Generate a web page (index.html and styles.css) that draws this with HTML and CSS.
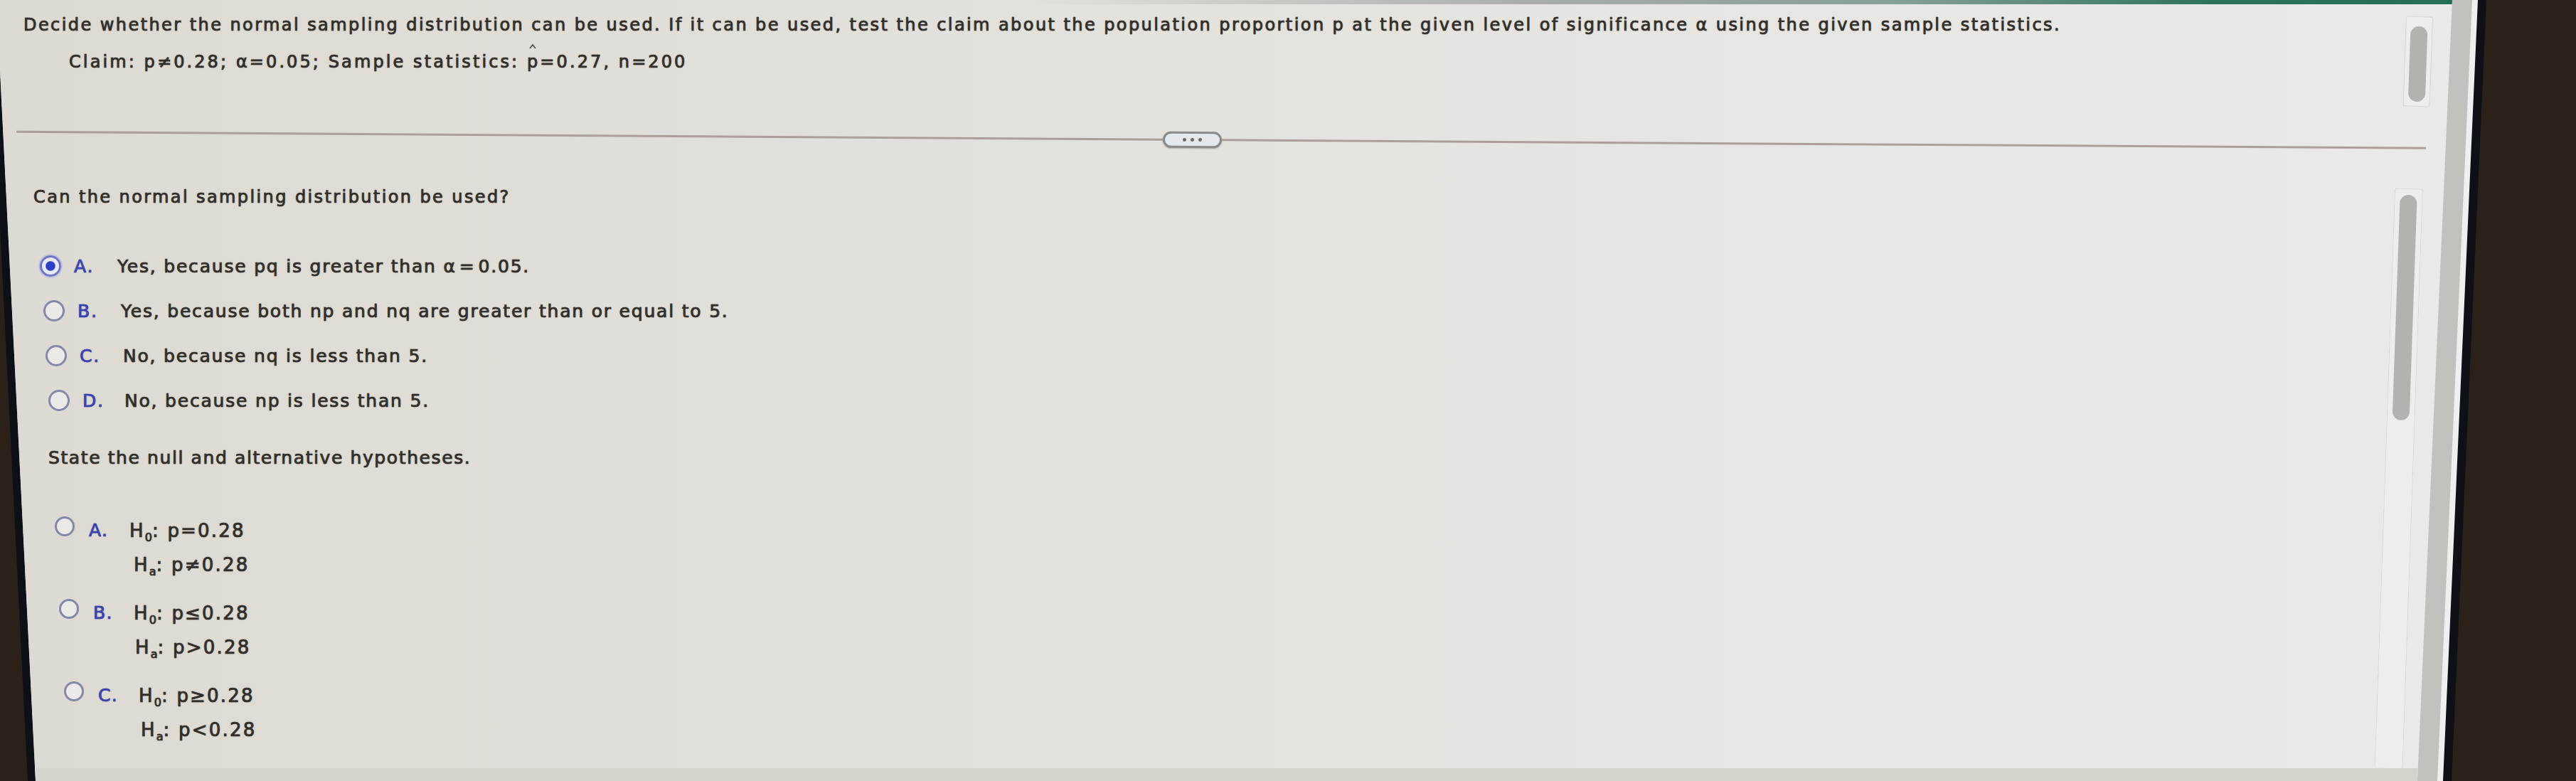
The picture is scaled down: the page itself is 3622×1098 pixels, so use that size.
FILE: index.html
```html
<!DOCTYPE html>
<html lang="en">
<head>
<meta charset="utf-8">
<title>Normal sampling distribution</title>
<link rel="stylesheet" href="styles.css">
</head>
<body>
<div class="frame"><div class="rim"><div class="band"><div class="screen">
  <div class="topbar"></div>
  <section class="pane pane-head">
    <div class="pane-content head-content">
      <p class="title">Decide whether the normal sampling distribution can be used. If it can be used, test the claim about the population proportion p at the given level of significance α using the given sample statistics.</p>
      <p class="claim">Claim: p≠0.28; α=0.05; Sample statistics: <span class="phat">p<svg class="hat" width="10" height="7" viewBox="0 0 10 7"><polyline points="1,6 5,1 9,6" fill="none" stroke="#4a4640" stroke-width="1.6"/></svg></span>=0.27, n=200</p>
    </div>
    <div class="scroll scroll-head"><div class="thumb"></div></div>
  </section>
  <div class="divider">
    <span class="seg seg-left"></span>
    <span class="pill"><i></i><i></i><i></i></span>
    <span class="seg seg-right"></span>
  </div>
  <section class="pane pane-body">
    <div class="pane-content body-content">
      <p class="question q1">Can the normal sampling distribution be used?</p>
      <ul class="choices">
        <li class="choice c1"><span class="radio checked"></span><span class="letter">A.</span><span class="text">Yes, because pq is greater than α<span class="op">=</span>0.05.</span></li>
        <li class="choice c2"><span class="radio"></span><span class="letter">B.</span><span class="text">Yes, because both np and nq are greater than or equal to 5.</span></li>
        <li class="choice c3"><span class="radio"></span><span class="letter">C.</span><span class="text">No, because nq is less than 5.</span></li>
        <li class="choice c4"><span class="radio"></span><span class="letter">D.</span><span class="text">No, because np is less than 5.</span></li>
      </ul>
      <p class="question q2">State the null and alternative hypotheses.</p>
      <ul class="hyps">
        <li class="hyp h1"><span class="radio"></span><span class="letter">A.</span><div class="lines"><span class="ln">H<sub>0</sub>: p=0.28</span><span class="ln ln2">H<sub>a</sub>: p≠0.28</span></div></li>
        <li class="hyp h2"><span class="radio"></span><span class="letter">B.</span><div class="lines"><span class="ln">H<sub>0</sub>: p≤0.28</span><span class="ln ln2">H<sub>a</sub>: p&gt;0.28</span></div></li>
        <li class="hyp h3"><span class="radio"></span><span class="letter">C.</span><div class="lines"><span class="ln">H<sub>0</sub>: p≥0.28</span><span class="ln ln2">H<sub>a</sub>: p&lt;0.28</span></div></li>
      </ul>
    </div>
    <div class="scroll scroll-body"><div class="thumb"></div></div>
  </section>
  <div class="bottom-band"></div>
</div></div></div></div>
</body>
</html>
```

FILE: styles.css
```css
* { box-sizing: border-box; }
html, body { margin: 0; padding: 0; }
body {
  width: 3622px;
  height: 1098px;
  overflow: hidden;
  background: #2b2119;
  font-family: "DejaVu Sans", "Liberation Sans", sans-serif;
  color: #322f2b;
}
p { margin: 0; }
ul { margin: 0; padding: 0; list-style: none; }

/* photographed screen edges */
.frame {
  width: 3622px;
  height: 1098px;
  background: #0e1018;
  clip-path: polygon(0 0, 3496px 0, 3447px 1098px, 39px 1098px, 0 320px);
}
.rim {
  width: 100%;
  height: 100%;
  background: #eef0ef;
  clip-path: polygon(0 0, 3484px 0, 3435px 1098px, 50px 1098px, 0 100px);
}
.band {
  width: 100%;
  height: 100%;
  background: #c4c1bc;
  clip-path: polygon(0 0, 3476px 0, 3427px 1098px, 50px 1098px, 0 100px);
}
.screen {
  width: 100%;
  height: 100%;
  background: linear-gradient(90deg, #dddad3 0%, #e2e0da 35%, #e7e6e2 70%, #ebeae7 100%);
  clip-path: polygon(0 0, 3448px 0, 3399px 1098px, 50px 1098px, 0 100px);
  text-shadow: 0 0 1.4px rgba(50, 47, 43, 0.65);
  -webkit-text-stroke: 0.7px;
}

.topbar {
  height: 6px;
  background: linear-gradient(90deg, rgba(160,160,155,0) 0%, rgba(160,160,155,0) 40%, #a9aca6 60%, #84a093 74%, #2c7456 86%, #1f6d4e 100%);
}

.pane { display: flex; }
.pane-content { flex: 1; min-width: 0; }

.pane-head { height: 178px; }
.head-content { padding-top: 14px; }
.title {
  padding-left: 33px;
  font-size: 24px;
  line-height: 30px;
  letter-spacing: 2.43px;
  white-space: nowrap;
}
.claim {
  margin-top: 22px;
  padding-left: 97px;
  font-size: 24px;
  line-height: 30px;
  letter-spacing: 3.1px;
  white-space: nowrap;
}
.phat { position: relative; }
.hat { position: absolute; left: 3px; top: -11px; }

/* scrollbars */
.scroll {
  flex: none;
  background: #eeede9;
  border: 1px solid #d8d5d0;
  border-radius: 3px;
  transform: rotate(2deg);
  transform-origin: 50% 0;
}
.scroll .thumb {
  width: 24px;
  margin: 0 auto;
  border-radius: 12px;
  background: #b5b2ad;
}
.scroll-head { width: 38px; height: 127px; margin: 17px 201px 0 0; }
.scroll-head .thumb { height: 106px; margin-top: 13px; }
.scroll-body { width: 40px; height: 815px; margin: 57px 215px 0 0; border-bottom: none; }
.scroll-body .thumb { height: 317px; margin-top: 8px; }

/* divider with grip */
.divider {
  display: flex;
  align-items: center;
  height: 24px;
  padding-left: 23px;
  transform: rotate(0.39deg);
  transform-origin: 1676px 50%;
}
.seg { height: 3px; background: #ab9f9a; flex: none; }
.seg-left { width: 1612px; }
.seg-right { width: 1693px; }
.pill {
  flex: none;
  width: 83px;
  height: 23px;
  border: 3px solid #8a8a8a;
  border-radius: 12px;
  background: #e4e7eb;
  display: flex;
  justify-content: center;
  align-items: center;
  gap: 6px;
  box-shadow: 0 1px 2px rgba(0,0,0,0.25);
}
.pill i { width: 5px; height: 5px; border-radius: 50%; background: #6a6a6a; }

/* body */
.pane-body { height: 872px; }
.body-content { padding-top: 54px; }
.question {
  font-size: 24px;
  line-height: 30px;
  letter-spacing: 2.4px;
  white-space: nowrap;
}
.q1 { padding-left: 47px; }
.q2 { margin-top: 49px; padding-left: 68px; font-size: 25px; letter-spacing: 1.6px; }

.choices { margin-top: 65px; display: flex; flex-direction: column; gap: 29px; }
.choice {
  display: flex;
  align-items: center;
  height: 34px;
  font-size: 25px;
  letter-spacing: 1.8px;
  white-space: nowrap;
}
.op { margin: 0 4px; }
.c1 { padding-left: 56px; }
.c2 { padding-left: 61px; }
.c3 { padding-left: 64px; }
.c4 { padding-left: 68px; }

.radio {
  flex: none;
  width: 30px;
  height: 30px;
  border-radius: 50%;
  border: 3px solid #8587ab;
  background: #eceae7;
  margin-right: 18px;
}
.radio.checked {
  border-color: #6f76c6;
  box-shadow: 0 0 0 2px #c1c5e2;
  background: radial-gradient(circle, #2e3dc6 0, #2e3dc6 6px, #e9eaf1 7.5px);
}
.letter { flex: none; width: 61px; color: #3a42b3; }
.c4 .letter { width: 59px; }

.hyps { margin-top: 63px; display: flex; flex-direction: column; gap: 20px; }
.hyp {
  display: flex;
  align-items: flex-start;
  font-size: 26px;
  line-height: 48px;
  letter-spacing: 2.2px;
  white-space: nowrap;
}
.hyp .radio { width: 28px; height: 28px; margin-top: 4px; margin-right: 20px; }
.hyp .letter { width: 57px; font-size: 25px; letter-spacing: 1.4px; }
.h1 { padding-left: 77px; }
.h2 { padding-left: 83px; }
.h3 { padding-left: 90px; }
.lines { display: flex; flex-direction: column; }
.ln { display: block; height: 48px; }
.h1 .ln2 { padding-left: 6px; }
.h2 .ln2 { padding-left: 2px; }
.h3 .ln2 { padding-left: 3px; }
sub { font-size: 16px; line-height: 0; vertical-align: -6px; letter-spacing: 0; }

.bottom-band { height: 18px; background: #d6d3cc; }
```
